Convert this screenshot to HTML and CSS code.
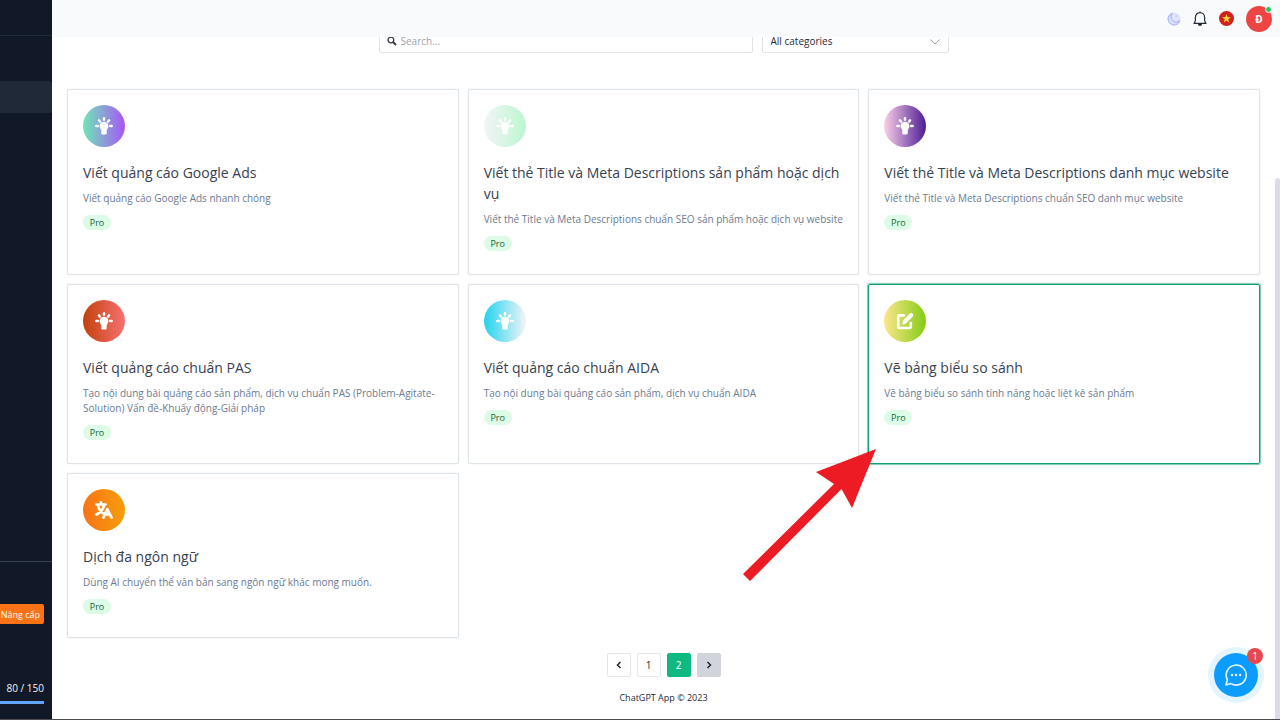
FILE: index.html
```html
<!DOCTYPE html>
<html lang="vi">
<head>
<meta charset="utf-8">
<meta name="viewport" content="width=device-width, initial-scale=1">
<title>ChatGPT App</title>
<link rel="stylesheet" href="styles.css">
</head>
<body>
<svg class="defs" aria-hidden="true">
  <symbol id="bulb" viewBox="0 0 18 18">
    <g stroke="#fff" stroke-width="2.600" stroke-linecap="round">
      <path d="M9 1.400v1.200M4 3.500l.9 1M14 3.500l-.9 1M1.400 9h1.400M16.600 9h-1.400"/>
    </g>
    <path fill="#fff" d="M9 4.800c2.600 0 4.400 1.800 4.400 4.200 0 1.900-1.100 2.800-1.700 4v3c0 1-.6 1.600-1.500 1.600H7.800c-.9 0-1.500-.6-1.500-1.600v-3C5.700 11.800 4.600 10.900 4.600 9c0-2.400 1.800-4.200 4.400-4.200z"/>
  </symbol>
  <symbol id="edit" viewBox="0 0 18 18">
    <path d="M8 3.400H3.400Q2.200 3.400 2.200 4.600v10Q2.200 16 3.400 16h10q1.400 0 1.400-1.400V11" fill="none" stroke="#fff" stroke-width="2.600" stroke-linecap="round"/>
    <path d="M6.300 12.500l.8-4 6.700-7q1.400-1.200 2.800.1t.1 2.800l-6.800 7z" fill="#fff"/>
  </symbol>
  <symbol id="translate" viewBox="0 0 18 18">
    <path d="M1.500 3.500h9M6 1.200v2.300M3 4.500c1 4.500 3.500 7 6 8.200M9 4.500C8 9 5.500 11.500 1.500 13.500M8.500 16.500l3.700-8.300 4.300 8.300M10.500 13.500h4" fill="none" stroke="#fff" stroke-width="2.700" stroke-linecap="round" stroke-linejoin="round"/>
  </symbol>
</svg>
<aside class="sidebar">
  <div class="brand"></div>
  <nav class="menu"><a class="menu-item" href="#" aria-label="Templates"></a></nav>
  <div class="plan">
    <button class="upgrade" type="button">Nâng cấp</button>
    <div class="quota">80 / 150</div>
    <div class="meter"></div>
  </div>
</aside>
<div class="page">
  <header class="topbar">
    <button class="icon-btn" type="button" aria-label="Dark mode">
      <svg width="14" height="14" viewBox="0 0 14 14"><circle cx="7" cy="7" r="6.500" fill="#e0e4fd"/><path d="M5.500 1.200A6 6 0 1 0 12.900 8.600 4.800 4.800 0 0 1 5.500 1.200z" fill="#dce1fd" stroke="#a5aff5"/><circle cx="9.500" cy="4" r="1" fill="#c5ccfb"/></svg>
    </button>
    <button class="icon-btn" type="button" aria-label="Notifications">
      <svg width="14" height="16" viewBox="0 0 14 16" fill="none" stroke="#222b38" stroke-width="1.200"><path d="M7 .5v1.200M1 12.400h12c-1-1-1.400-2-1.400-3.300V6.300a4.600 4.600 0 0 0-9.200 0v2.800c0 1.300-.4 2.300-1.400 3.300z" stroke-linejoin="round"/><path d="M5 13h4c0 1.300-.8 2-2 2s-2-.7-2-2z" fill="#222b38" stroke="none"/></svg>
    </button>
    <button class="icon-btn" type="button" aria-label="Tiếng Việt">
      <svg width="15" height="15" viewBox="0 0 15 15"><circle cx="7.500" cy="7.500" r="7.500" fill="#d2201f"/><path d="M7.500 3l1.100 3.200h3.300L9.200 8.200l1 3.300-2.700-2-2.700 2 1-3.300-2.700-2h3.300z" fill="#ffe03a"/></svg>
    </button>
    <button class="avatar" type="button">Đ<span class="online"></span></button>
  </header>
  <main class="content">
    <form class="filters">
      <label class="search">
        <svg width="10" height="10" viewBox="0 0 10 10" fill="none" stroke="#30363f"><circle cx="3.900" cy="3.900" r="2.900" stroke-width="1.300"/><path d="M6 6l3 3" stroke-width="1.800"/></svg>
        <input type="text" placeholder="Search..." aria-label="Search">
      </label>
      <div class="category">
        <select aria-label="Category"><option>All categories</option></select>
        <svg class="chevron" width="10" height="6" viewBox="0 0 10 6" fill="none" stroke="#9ca3af"><path d="M.5.5L5 5 9.500.5"/></svg>
      </div>
    </form>
    <section class="cards">
      <article class="card">
        <div class="badge g-mint"><svg class="glyph"><use href="#bulb"/></svg></div>
        <h2>Viết quảng cáo Google Ads</h2><p>Viết quảng cáo Google Ads nhanh chóng</p><span class="pro">Pro</span>
      </article>
      <article class="card">
        <div class="badge g-pale"><svg class="glyph"><use href="#bulb"/></svg></div>
        <h2>Viết thẻ Title và Meta Descriptions sản phẩm hoặc dịch vụ</h2><p>Viết thẻ Title và Meta Descriptions chuẩn SEO sản phẩm hoặc dịch vụ website</p><span class="pro">Pro</span>
      </article>
      <article class="card">
        <div class="badge g-violet"><svg class="glyph"><use href="#bulb"/></svg></div>
        <h2>Viết thẻ Title và Meta Descriptions danh mục website</h2><p>Viết thẻ Title và Meta Descriptions chuẩn SEO danh mục website</p><span class="pro">Pro</span>
      </article>
      <article class="card">
        <div class="badge g-red"><svg class="glyph"><use href="#bulb"/></svg></div>
        <h2>Viết quảng cáo chuẩn PAS</h2><p>Tạo nội dung bài quảng cáo sản phẩm, dịch vụ chuẩn PAS (Problem-Agitate-Solution) Vấn đề-Khuấy động-Giải pháp</p><span class="pro">Pro</span>
      </article>
      <article class="card">
        <div class="badge g-cyan"><svg class="glyph"><use href="#bulb"/></svg></div>
        <h2>Viết quảng cáo chuẩn AIDA</h2><p>Tạo nội dung bài quảng cáo sản phẩm, dịch vụ chuẩn AIDA</p><span class="pro">Pro</span>
      </article>
      <article class="card selected">
        <div class="badge g-lime"><svg class="glyph"><use href="#edit"/></svg></div>
        <h2>Vẽ bảng biểu so sánh</h2><p>Vẽ bảng biểu so sánh tính năng hoặc liệt kê sản phẩm</p><span class="pro">Pro</span>
        <svg class="pointer" width="134" height="134" viewBox="0 0 134 134" aria-hidden="true"><path d="M133 1L109 60 98.500 41 7 133 0 126 91 36 73 24z" fill="#ed1c24"/></svg>
      </article>
      <article class="card">
        <div class="badge g-orange"><svg class="glyph"><use href="#translate"/></svg></div>
        <h2>Dịch đa ngôn ngữ</h2><p>Dùng AI chuyển thể văn bản sang ngôn ngữ khác mong muốn.</p><span class="pro">Pro</span>
      </article>
    </section>
    <nav class="pager" aria-label="Pages">
      <button type="button" aria-label="Previous"><svg width="6" height="8" viewBox="0 0 6 8" fill="none" stroke="#1f2937" stroke-width="1.500"><path d="M4.500 1l-3 3 3 3"/></svg></button>
      <button type="button">1</button>
      <button type="button" class="current" aria-current="page">2</button>
      <button type="button" class="off" aria-label="Next"><svg width="6" height="8" viewBox="0 0 6 8" fill="none" stroke="#1f2937" stroke-width="1.500"><path d="M1.500 1l3 3-3 3"/></svg></button>
    </nav>
    <footer class="footer">ChatGPT App © 2023</footer>
  </main>
</div>
<div class="scroll-thumb"></div>
<button class="chat" type="button" aria-label="Chat">
  <svg width="24" height="24" viewBox="0 0 24 24" fill="none" stroke="#e8f6ff" stroke-width="1.600"><path d="M2 22l1.400-5.200A10 10 0 1 1 7 20.600z" stroke-linejoin="round"/><g fill="#fff" stroke="none"><circle cx="8" cy="12" r="1.200"/><circle cx="12" cy="12" r="1.200"/><circle cx="16" cy="12" r="1.200"/></g></svg>
  <span class="count">1</span>
</button>
</body>
</html>
```
FILE: styles.css
```css
* { box-sizing: border-box; }
body {
  margin: 0;
  min-height: 100vh;
  display: flex;
  position: relative;
  overflow: hidden;
  border-bottom: 1px solid #4b4b4b;
  background: #fff;
  color: #1f2937;
  font-family: "Open Sans", "Noto Sans", sans-serif;
  font-size: 10px;
}
button, input, select { font: inherit; color: inherit; }
button { padding: 0; border: 0; background: none; }
svg { display: block; flex: none; }
.defs { position: absolute; width: 0; height: 0; }

.sidebar {
  flex: none;
  width: 52px;
  display: flex;
  flex-direction: column;
  overflow: hidden;
  background: #111827;
  color: #f3f4f6;
}
.brand { height: 36px; border-bottom: 1px solid #1f2937; }
.menu { flex: 1; padding-top: 45px; }
.menu-item { display: block; height: 32px; border-radius: 0 3px 3px 0; background: #1f2937; }
.plan {
  display: flex;
  flex-direction: column;
  align-items: flex-end;
  padding: 42px 8px 15px 0;
  border-top: 1px solid #374151;
}
.upgrade {
  width: 100%;
  height: 20px;
  padding-right: 4px;
  border-radius: 0 2px 2px 0;
  background: #f97316;
  color: #fff;
  font-size: 9px;
  text-align: right;
  white-space: nowrap;
}
.quota { margin-top: 56px; line-height: 16px; white-space: nowrap; }
.meter { width: 100%; height: 3px; margin-top: 5px; background: #60a5fa; }

.page { flex: 1; min-width: 0; display: flex; flex-direction: column; }
.topbar {
  position: relative;
  z-index: 2;
  height: 37px;
  display: flex;
  align-items: center;
  justify-content: flex-end;
  gap: 12px;
  padding-right: 8px;
  background: #f9fafb;
}
.avatar {
  position: relative;
  width: 26px;
  height: 26px;
  border-radius: 50%;
  background: #ef4444;
  color: #fff;
  font-weight: 700;
}
.online {
  position: absolute;
  top: 0;
  right: 0;
  width: 7px;
  height: 7px;
  border: 1px solid #fff;
  border-radius: 50%;
  background: #22c55e;
}

.content { padding: 0 20px 0 15px; }
.filters {
  display: flex;
  justify-content: center;
  gap: 9px;
  margin-top: -8px;
}
.search, .category {
  height: 24px;
  display: flex;
  align-items: center;
  border: 1px solid #dfe3e8;
  border-radius: 2px;
  background: #fff;
}
.search { width: 374px; gap: 4px; padding-left: 7px; }
.search input { flex: 1; min-width: 0; border: 0; padding: 0; outline: 0; background: none; }
.search input::placeholder { color: #9ca3af; }
.category { position: relative; width: 187px; }
.category select {
  width: 100%;
  height: 100%;
  padding: 0 8px;
  border: 0;
  background: none;
  appearance: none;
}
.chevron { position: absolute; right: 8px; top: 9px; pointer-events: none; }

.cards {
  display: grid;
  grid-template-columns: repeat(3, minmax(0, 1fr));
  gap: 9px;
  margin-top: 36px;
}
.card {
  position: relative;
  padding: 15px 14px 23px 15px;
  border: 1px solid #dfe4ea;
  border-radius: 2px;
  box-shadow: 0 0 1px #c3cbd5;
}
.card.selected { border-color: #0e9f6e; box-shadow: 0 0 1px 1px #7cc7a9; }
.badge {
  width: 42px;
  height: 42px;
  display: grid;
  place-items: center;
  border-radius: 50%;
}
.glyph { width: 18px; height: 18px; }
.g-mint { background: linear-gradient(90deg, #6ee7b7, #a855f7); }
.g-pale { background: linear-gradient(90deg, #f3f4f6, #bbf7d0); }
.g-violet { background: linear-gradient(90deg, #fbcfe8, #4c1d95); }
.g-red { background: linear-gradient(90deg, #c2410c, #f87171); }
.g-cyan { background: linear-gradient(90deg, #22d3ee, #f3f4f6); }
.g-lime { background: linear-gradient(90deg, #fde68a, #84cc16); }
.g-orange { background: linear-gradient(90deg, #f97316, #f59e0b); }
.card h2 {
  margin: 15px 0 8px;
  font-size: 14px;
  line-height: 21px;
  font-weight: 400;
  color: #374151;
}
.card p { margin: 0 0 9px; line-height: 15px; color: #6b7a90; }
.pro {
  display: block;
  width: 28px;
  border-radius: 8px;
  background: #dcfce7;
  color: #166534;
  font-size: 9px;
  line-height: 15px;
  text-align: center;
}
.pointer { position: absolute; right: 382px; top: 163px; z-index: 3; }

.pager { display: flex; justify-content: center; gap: 6px; margin-top: 15px; }
.pager button {
  width: 24px;
  height: 24px;
  display: grid;
  place-items: center;
  border: 1px solid #e5e7eb;
  border-radius: 2px;
}
.pager .current { border-color: #10b981; background: #10b981; color: #fff; }
.pager .off { border-color: #d1d5db; background: #d1d5db; }
.footer { margin-top: 13px; line-height: 16px; font-size: 9px; text-align: center; }

.scroll-thumb {
  position: absolute;
  top: 178px;
  right: 0;
  bottom: 0;
  width: 5px;
  border-radius: 3px 3px 0 0;
  background: #dddde9;
}
.chat {
  position: absolute;
  right: 22px;
  bottom: 22px;
  width: 44px;
  height: 44px;
  display: grid;
  place-items: center;
  border-radius: 50%;
  background: #0a9cff;
  box-shadow: 0 0 0 6px #e4f5ff;
}
.count {
  position: absolute;
  top: -5px;
  right: -5px;
  width: 16px;
  height: 16px;
  border-radius: 50%;
  background: #e5484d;
  color: #fff;
  line-height: 16px;
}
```
